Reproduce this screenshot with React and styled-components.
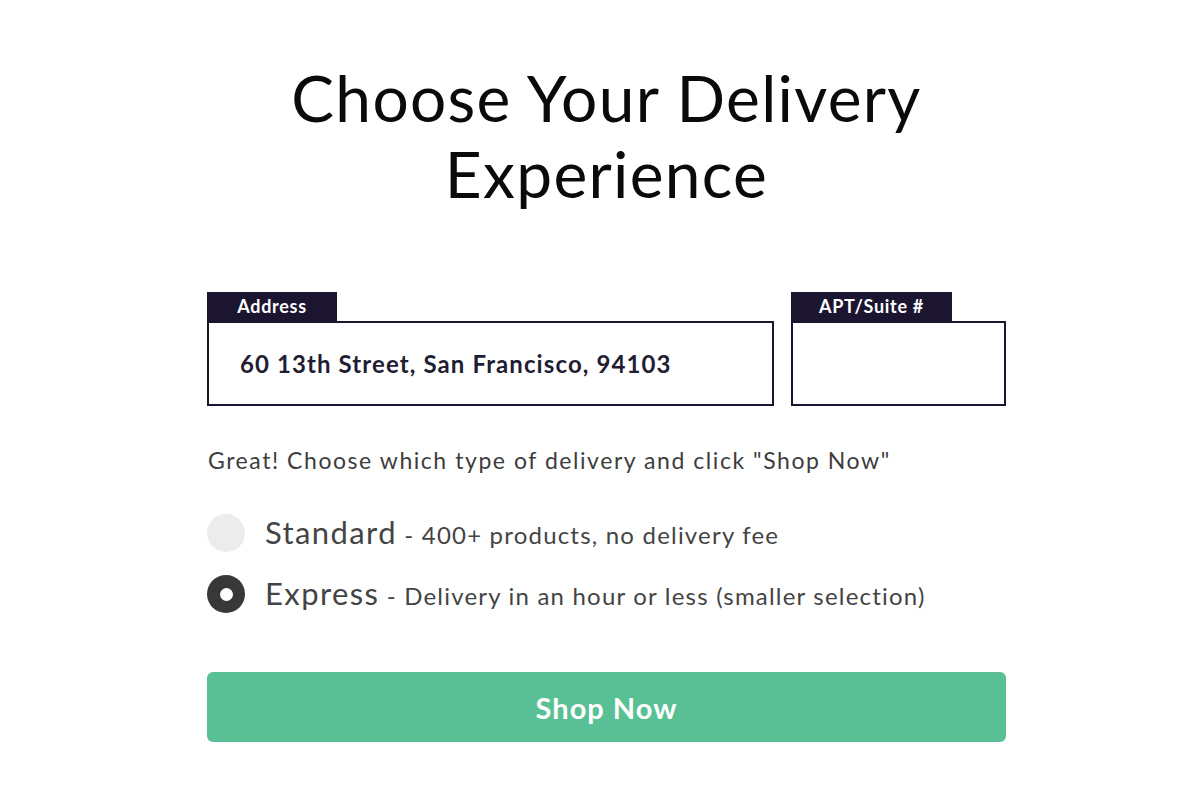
import styled, { createGlobalStyle } from 'styled-components';
import { useState } from 'react';

const GlobalStyle = createGlobalStyle`
  html, body {
    margin: 0;
    padding: 0;
    background: #fff;
  }
  body {
    font-family: Lato, "Open Sans", sans-serif;
    color: #111;
  }
`;

const Page = styled.div`
  width: 1200px;
  height: 800px;
  box-sizing: border-box;
  padding: 60px 194px 0 207px;
`;

const Title = styled.h1`
  margin: 0;
  font-family: Lato, sans-serif;
  font-weight: 400;
  font-size: 64px;
  line-height: 76px;
  text-align: center;
  color: #0a0a0a;
  letter-spacing: 1.3px;
`;

const Fields = styled.div`
  display: flex;
  gap: 17px;
  margin-top: 80px;
`;

const Field = styled.div`
  display: flex;
  flex-direction: column;
  flex: ${p => (p.$grow ? '1' : '0 0 215px')};
`;

const Tab = styled.div`
  align-self: flex-start;
  width: ${p => p.$w}px;
  height: 29px;
  box-sizing: border-box;
  background: #1b1530;
  color: #fff;
  font-weight: 700;
  font-size: 18px;
  line-height: 29px;
  letter-spacing: 0.7px;
  text-align: center;
`;

const Input = styled.input`
  height: 85px;
  box-sizing: border-box;
  border: 2px solid #1b1530;
  padding: 0 31px;
  margin: 0;
  font-family: Lato, sans-serif;
  font-weight: 700;
  font-size: 24px;
  letter-spacing: 1.1px;
  color: #221d33;
  outline: none;
  width: 100%;
`;

const Hint = styled.p`
  margin: 40px 0 0 1px;
  font-size: 23px;
  color: #3d3d3d;
  letter-spacing: 1.55px;
`;

const Options = styled.div`
  display: flex;
  flex-direction: column;
  gap: 23px;
  margin-top: 40px;
`;

const Option = styled.label`
  display: flex;
  align-items: center;
  gap: 20px;
  height: 38px;
  cursor: pointer;
`;

const Radio = styled.span`
  width: 38px;
  height: 38px;
  border-radius: 50%;
  background: ${p => (p.$on ? '#383838' : '#ececec')};
  display: flex;
  align-items: center;
  justify-content: center;
  flex-shrink: 0;

  &::after {
    content: '';
    display: ${p => (p.$on ? 'block' : 'none')};
    width: 13px;
    height: 13px;
    border-radius: 50%;
    background: #fff;
  }
`;

const OptionText = styled.span`
  line-height: 38px;
  padding-top: 3px;
  color: #444;
  white-space: nowrap;
`;

const OptionName = styled.span`
  font-size: 31px;
  letter-spacing: 1.4px;
`;

const OptionDesc = styled.span`
  font-size: 24px;
  letter-spacing: 1.2px;
`;

const ShopButton = styled.button`
  display: block;
  width: 100%;
  height: 70px;
  margin-top: 59px;
  border: none;
  border-radius: 6px;
  background: #59bf94;
  color: #fff;
  font-family: Lato, sans-serif;
  font-weight: 700;
  font-size: 29px;
  letter-spacing: 1px;
  cursor: pointer;
`;

const options = [
  { id: 'standard', name: 'Standard', desc: '400+ products, no delivery fee' },
  { id: 'express', name: 'Express', desc: 'Delivery in an hour or less (smaller selection)' }
];

const App = () => {
  const [address, setAddress] = useState('60 13th Street, San Francisco, 94103');
  const [apt, setApt] = useState('');
  const [type, setType] = useState('express');

  return (
    <>
      <GlobalStyle />
      <Page>
        <Title>Choose Your Delivery<br />Experience</Title>

        <Fields>
          <Field $grow>
            <Tab $w={130}>Address</Tab>
            <Input value={address} onChange={e => setAddress(e.target.value)} />
          </Field>
          <Field>
            <Tab $w={161}>APT/Suite #</Tab>
            <Input value={apt} onChange={e => setApt(e.target.value)} />
          </Field>
        </Fields>

        <Hint>Great! Choose which type of delivery and click "Shop Now"</Hint>

        <Options>
          {options.map(o => (
            <Option key={o.id} onClick={() => setType(o.id)}>
              <Radio $on={type === o.id} />
              <OptionText>
                <OptionName>{o.name}</OptionName>
                <OptionDesc> - {o.desc}</OptionDesc>
              </OptionText>
            </Option>
          ))}
        </Options>

        <ShopButton>Shop Now</ShopButton>
      </Page>
    </>
  );
};

export default App;
